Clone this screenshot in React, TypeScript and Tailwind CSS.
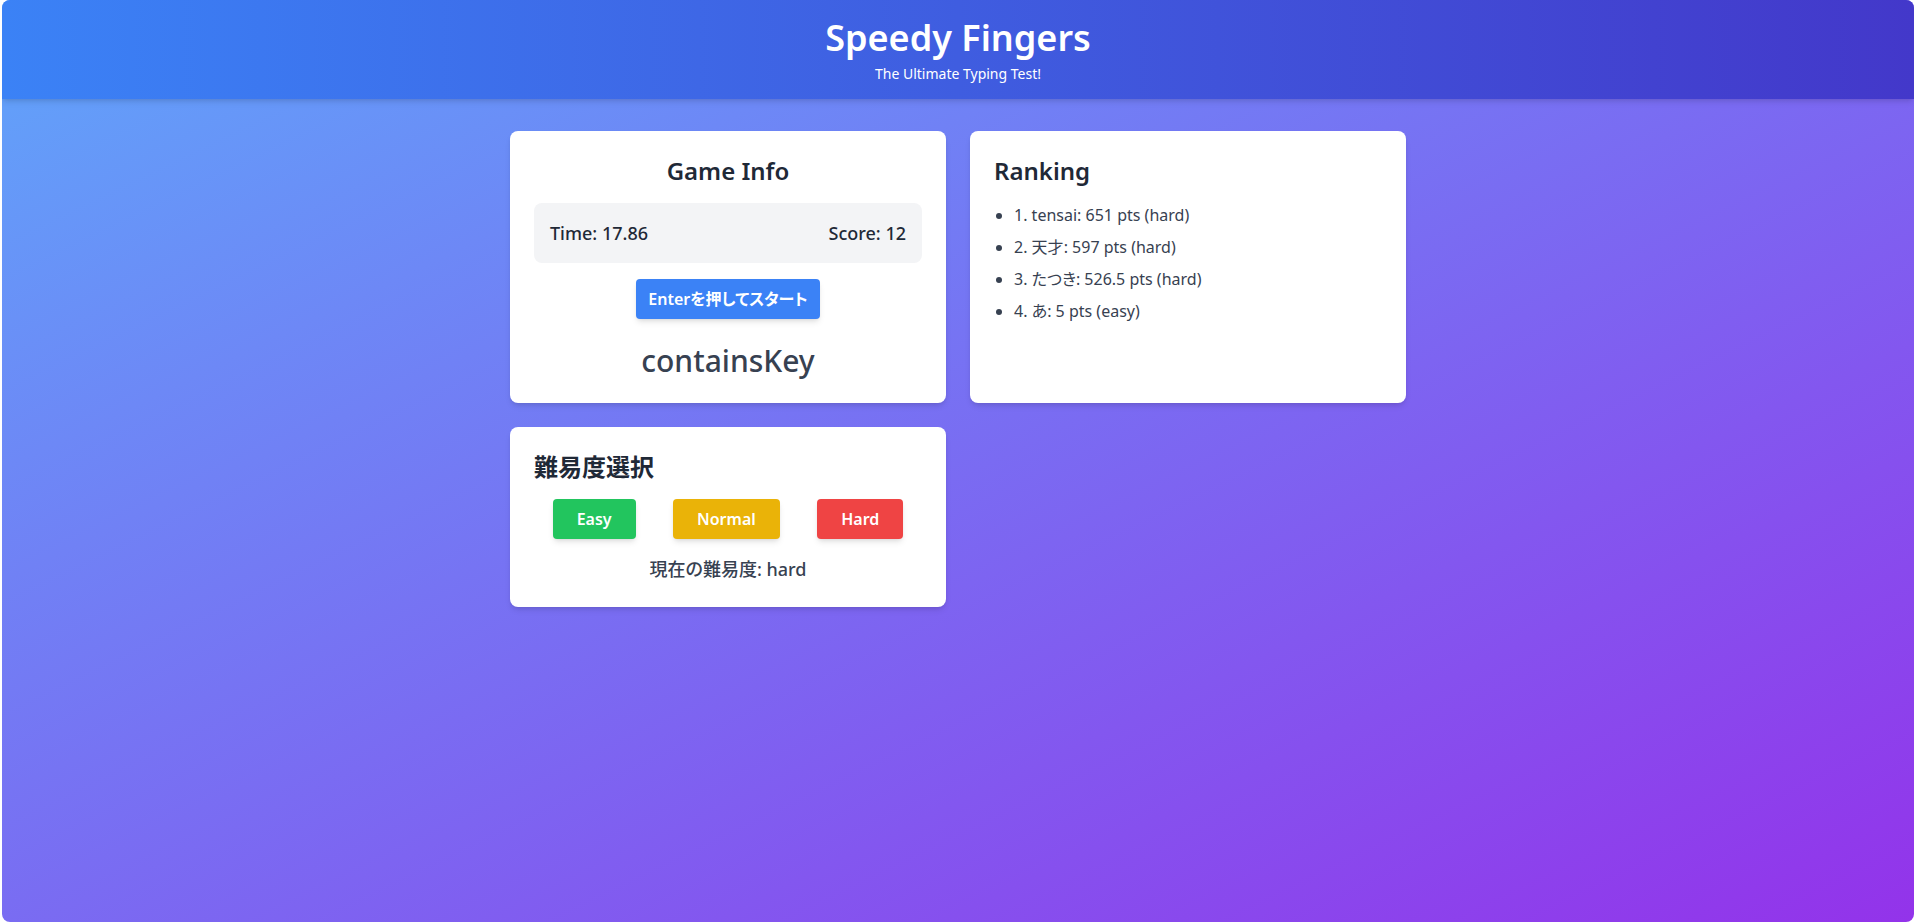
import React from 'react'

const ranking = [
  { name: 'tensai', score: 651, level: 'hard' },
  { name: '天才', score: 597, level: 'hard' },
  { name: 'たつき', score: 526.5, level: 'hard' },
  { name: 'あ', score: 5, level: 'easy' },
]

export default function App(): JSX.Element {
  return (
    <div className="min-h-screen bg-white pl-[2px] pr-px pb-px font-['Noto_Sans','Noto_Sans_CJK_JP',sans-serif] [font-feature-settings:'palt']">
      <div className="min-h-[922px] rounded-lg overflow-hidden bg-linear-to-br/srgb from-[#60a5fa] to-[#9333ea] flex flex-col">
        {/* Header */}
        <header className="bg-linear-to-r/srgb from-[#3b82f6] to-[#4338ca] text-white text-center pt-[18px] pb-[15px] shadow-md">
          <h1 className="text-4xl font-semibold">Speedy Fingers</h1>
          <p className="text-sm mt-[6px]">The Ultimate Typing Test!</p>
        </header>

        <main className="flex-1 py-8">
          <div className="max-w-4xl mx-auto grid grid-cols-2 gap-6 items-start">
            {/* Game Info */}
            <div className="bg-white rounded-lg shadow-md p-6 text-center">
              <h2 className="text-2xl font-semibold text-[#1f2937] mb-4">Game Info</h2>
              <div className="bg-[#f3f4f6] rounded-lg p-4 flex justify-between text-lg font-medium text-[#1f2937]">
                <span>Time: 17.86</span>
                <span>Score: 12</span>
              </div>
              <button className="mt-4 bg-[#3b82f6] text-white font-semibold px-3 py-2 rounded shadow-md">
                Enterを押してスタート
              </button>
              <div className="mt-6 text-3xl font-medium text-[#374151]">containsKey</div>
            </div>

            {/* Ranking */}
            <div className="bg-white rounded-lg shadow-md p-6 self-stretch">
              <h2 className="text-2xl font-semibold text-[#1f2937] mb-4">Ranking</h2>
              <ul className="list-disc pl-5 space-y-2 text-[#374151]">
                {ranking.map((r, i) => (
                  <li key={r.name}>
                    {i + 1}. {r.name}: {r.score} pts ({r.level})
                  </li>
                ))}
              </ul>
            </div>

            {/* Difficulty */}
            <div className="bg-white rounded-lg shadow-md p-6">
              <h2 className="text-2xl font-semibold text-[#1f2937] mb-4">難易度選択</h2>
              <div className="flex justify-around">
                <button className="bg-[#22c55e] text-white font-semibold px-6 py-2 rounded shadow-md">Easy</button>
                <button className="bg-[#eab308] text-white font-semibold px-6 py-2 rounded shadow-md">Normal</button>
                <button className="bg-[#ef4444] text-white font-semibold px-6 py-2 rounded shadow-md">Hard</button>
              </div>
              <p className="mt-4 text-center text-lg font-medium text-[#374151]">現在の難易度: hard</p>
            </div>
          </div>
        </main>
      </div>
    </div>
  )
}
